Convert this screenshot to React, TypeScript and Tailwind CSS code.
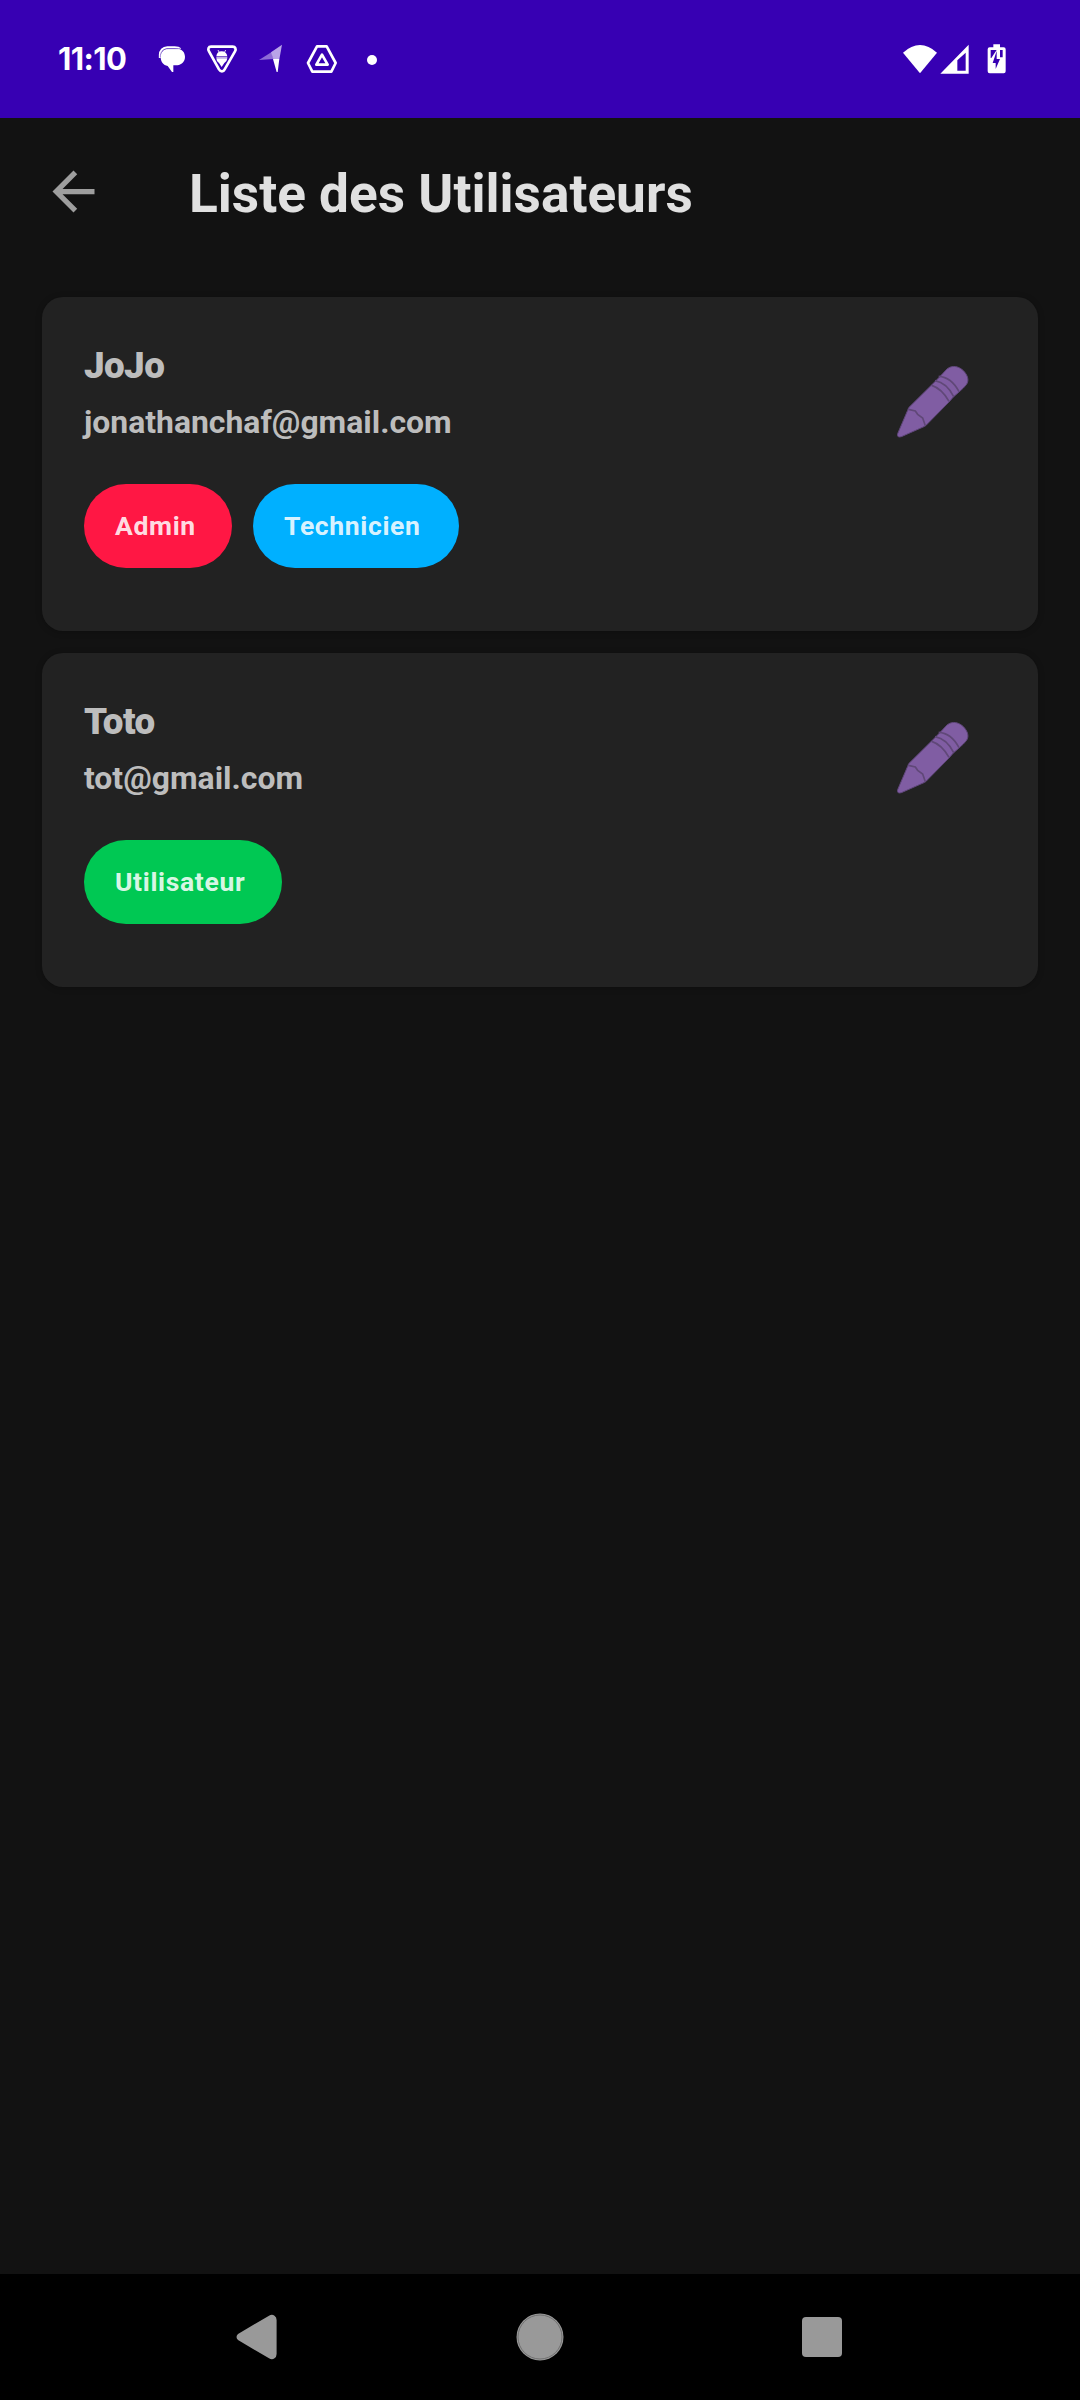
type Role = "Admin" | "Technicien" | "Utilisateur";

const users: { name: string; email: string; roles: Role[] }[] = [
  { name: "JoJo", email: "jonathanchaf@gmail.com", roles: ["Admin", "Technicien"] },
  { name: "Toto", email: "tot@gmail.com", roles: ["Utilisateur"] },
];

const chipStyle: Record<Role, string> = {
  Admin: "w-[148px] bg-[#ff1744]",
  Technicien: "w-[206px] bg-[#00b0ff]",
  Utilisateur: "w-[198px] bg-[#00c853]",
};

function StatusBar() {
  return (
    <div className="flex h-[118px] items-center bg-[#3700b3] text-white">
      <div className="ml-[58px] w-[73px] whitespace-nowrap font-[Inter,sans-serif] text-[31px] font-bold leading-[36px] tracking-[-0.6px]">
        11:10
      </div>
      {/* Messages */}
      <svg className="ml-[27px] h-[28px] w-[28px]" viewBox="355 81 84 84">
        <path
          fill="#fff"
          d="M385 92h28c14 0 23 11 23 24 0 14-9 23-23 26h-12v20h-4l-13-18c-13-3-21-12-21-28 0-14 9-24 22-24z"
        />
        <path fill="none" stroke="#fff" strokeWidth="7" d="M361 120v-9c0-13 9-23 22-23h22c8 0 13 1 17 5" />
        <path fill="none" stroke="#3700b3" strokeWidth="1.5" d="M362 119c-1-16 8-27 23-27h37" />
      </svg>
      {/* Android badge */}
      <svg className="ml-[20px] h-[30px] w-[32px]" viewBox="18 47 96 90">
        <path
          fill="none"
          stroke="#fff"
          strokeWidth="8"
          strokeLinejoin="round"
          d="M33 55h65c8 0 11 7 7 14l-31 54c-4 8-12 8-17 0L27 69c-4-7-2-14 6-14z"
        />
        <path fill="#fff" d="M49 84q2-15 16-15t17 15zM49 90h33q-1 10-9 14l-8 12-8-12q-8-4-8-14z" />
        <path stroke="#fff" strokeWidth="2.5" d="m54 65 4 8m19-8-4 8M49 87h33" />
      </svg>
      {/* Navigation arrow */}
      <svg className="ml-[20px] h-[30px] w-[26px]" viewBox="174 45 78 90">
        <path fill="#8e6bd6" d="M177 93 215 69l5 21z" />
        <path fill="#b9a3e8" d="m213 70 33-23-8 44h-18z" />
        <path fill="#fff" d="M219 90h19l-5 39h-3z" />
      </svg>
      {/* Drive */}
      <svg className="ml-[22px] h-[30px] w-[32px]" viewBox="318 45 96 90">
        <g fill="none" stroke="#fff" strokeWidth="8" strokeLinejoin="round">
          <path d="M351 52h29l27 50-13 26h-57l-13-26z" />
          <path d="m366 77 17 30h-34z" />
        </g>
      </svg>
      <span className="ml-[29px] mt-[1px] h-[10px] w-[10px] rounded-full bg-white" />
      {/* Wi-Fi */}
      <svg className="ml-auto h-[30px] w-[36px]" viewBox="66 41 108 90">
        <path fill="#fff" d="M69 67q51-46 102 0l-51 62z" />
      </svg>
      {/* Mobile signal */}
      <svg className="ml-[2px] h-[30px] w-[30px]" viewBox="179 42 90 90">
        <path fill="#fff" fillRule="evenodd" d="M265 44v87h-85zM256 68l-25 23v31h25z" />
      </svg>
      {/* Charging battery */}
      <svg className="ml-[17px] mr-[73px] h-[30px] w-[20px]" viewBox="319 41 60 90">
        <path fill="#fff" d="M338 42h20v9h11q6 0 6 6v66q0 6-6 6h-42q-6 0-6-6V57q0-6 6-6h11z" />
        <path fill="#3700b3" d="M330 59h18l-16 24h-2zM358 59h8v22h-8zM348 62v24h10l-13 30v-18h-9z" />
      </svg>
    </div>
  );
}

function Header() {
  return (
    <header className="flex h-[147px] items-center pl-[42px]">
      <svg className="h-[63px] w-[63px]" viewBox="0 0 24 24" fill="#9e9e9e">
        <path d="M20 11H7.83l5.59-5.59L12 4l-8 8 8 8 1.41-1.41L7.83 13H20v-2z" />
      </svg>
      <h1 className="ml-[84px] mt-[4px] whitespace-nowrap text-[53.2px] font-bold leading-[62px] text-[#e0e0e0]">
        Liste des Utilisateurs
      </h1>
    </header>
  );
}

function PencilIcon() {
  return (
    <svg className="h-[74px] w-[74px]" viewBox="108 104 222 222">
      <path
        fill="#805da3"
        stroke="#60477b"
        strokeWidth="3"
        strokeLinejoin="round"
        d="M146 232 232 147Q248 130 261 116C277 103 296 108 309 120C322 133 329 149 319 163Q312 172 297 185L280 200 267 215 202 281Q198 286 194 288L124 319Q110 323 113 310L143 240z"
      />
      <path
        fill="none"
        stroke="#604878"
        strokeWidth="5"
        d="M145 237 166 242 173 252 188 263 196 286M215 165Q246 175 267 213M225 151Q261 158 281 199M236 138Q274 140 297 184"
      />
    </svg>
  );
}

export default function App() {
  return (
    <div className="flex h-[2400px] w-[1080px] flex-col bg-[#121212] font-[Roboto,sans-serif]">
      <StatusBar />
      <Header />
      <main className="flex grow flex-col gap-[22px] px-[42px] pt-[32px]">
        {users.map((user) => (
          <section
            key={user.email}
            className="flex h-[334px] justify-between rounded-[21px] bg-[#222222] pl-[42px] pr-[68px] shadow-[0_1px_6px_rgba(0,0,0,0.25)]"
          >
            <div className="pt-[47px]">
              <h2 className="text-[36.75px] font-black leading-[44px] tracking-[-0.6px] text-[#bdbdbd]">{user.name}</h2>
              <p className="mt-[15px] text-[31.9px] font-bold leading-[38px] text-[#bdbdbd]">{user.email}</p>
              <div className="mt-[43px] flex gap-[21px]">
                {user.roles.map((role) => (
                  <span
                    key={role}
                    className={`flex h-[84px] items-center rounded-full pl-[31px] text-[26.5px] font-bold leading-[32px] tracking-[0.65px] text-white/87 ${chipStyle[role]}`}
                  >
                    {role}
                  </span>
                ))}
              </div>
            </div>
            <div className="pt-[68px]">
              <PencilIcon />
            </div>
          </section>
        ))}
      </main>
      <nav className="flex h-[126px] items-center bg-black">
        <svg className="ml-[236px] h-[46px] w-[42px]" viewBox="0 0 42 46" fill="#999">
          <path d="M2 20 33 1.7q3-1.7 5.500 0Q40.600 3 40.600 6v34q0 3-2.100 4.300-2.500 1.700-5.500 0L2 26q-3-3 0-6z" />
        </svg>
        <svg className="ml-[237px] h-[50px] w-[50px]" viewBox="0 0 50 50">
          <circle cx="25" cy="25" r="23.500" fill="#999" />
          <circle cx="25" cy="25" r="22" fill="none" stroke="#707070" strokeWidth="1" />
        </svg>
        <span className="ml-[237px] h-[40px] w-[40px] rounded-[4px] bg-[#999]" />
      </nav>
    </div>
  );
}
